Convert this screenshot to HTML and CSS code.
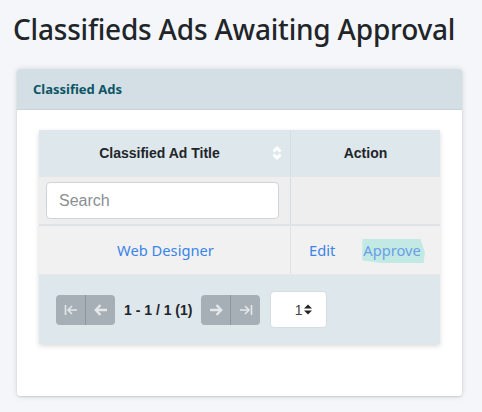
FILE: index.html
```html
<!DOCTYPE html>
<html>
<head>
<meta charset="utf-8">
<link rel="stylesheet" href="styles.css">
</head>
<body>
<h1 class="page-title">Classifieds Ads Awaiting Approval</h1>
<div class="card">
  <div class="card-header">Classified Ads</div>
  <div class="card-body">
    <div class="grid">
      <div class="row head">
        <div class="cell c1 th sortable">Classified Ad Title
          <svg class="sort" width="10" height="16" viewBox="0 0 10 16"><polyline points="1.5,6.5 5,3 8.5,6.5" fill="none" stroke="#fff" stroke-width="3"/><polyline points="1.5,9.5 5,13 8.5,9.5" fill="none" stroke="#fff" stroke-width="3"/></svg>
        </div>
        <div class="cell c2 th">Action</div>
      </div>
      <div class="row filter">
        <div class="cell c1 fcell"><div class="search">Search</div></div>
        <div class="cell c2"></div>
      </div>
      <div class="row data">
        <div class="cell c1"><a class="link">Web Designer</a></div>
        <div class="cell c2 actions"><a class="link">Edit</a><a class="link approve">Approve</a></div>
      </div>
      <div class="pager">
        <div class="btn-group">
          <span class="pbtn"><svg width="14" height="12" viewBox="0 0 14 12"><line x1="1.5" y1="1" x2="1.5" y2="11" stroke="#e4e8ea" stroke-width="1.6"/><polyline points="8,2 4,6 8,10" fill="none" stroke="#e4e8ea" stroke-width="1.6"/><line x1="4" y1="6" x2="13" y2="6" stroke="#e4e8ea" stroke-width="1.6"/></svg></span>
          <span class="pbtn"><svg width="14" height="12" viewBox="0 0 14 12"><polyline points="6.5,1 1.8,6 6.5,11" fill="none" stroke="#e4e8ea" stroke-width="2.4"/><line x1="2" y1="6" x2="13" y2="6" stroke="#e4e8ea" stroke-width="2.4"/></svg></span>
        </div>
        <span class="pinfo">1 - 1 / 1 (1)</span>
        <div class="btn-group">
          <span class="pbtn"><svg width="14" height="12" viewBox="0 0 14 12"><polyline points="7.5,1 12.2,6 7.5,11" fill="none" stroke="#e4e8ea" stroke-width="2.4"/><line x1="1" y1="6" x2="12" y2="6" stroke="#e4e8ea" stroke-width="2.4"/></svg></span>
          <span class="pbtn"><svg width="14" height="12" viewBox="0 0 14 12"><line x1="12.5" y1="1" x2="12.5" y2="11" stroke="#e4e8ea" stroke-width="1.6"/><polyline points="6,2 10,6 6,10" fill="none" stroke="#e4e8ea" stroke-width="1.6"/><line x1="1" y1="6" x2="10" y2="6" stroke="#e4e8ea" stroke-width="1.6"/></svg></span>
        </div>
        <div class="pselect"><span>1</span><svg width="8" height="11" viewBox="0 0 8 11"><polygon points="0,4.5 4,0.5 8,4.5" fill="#222"/><polygon points="0,6.5 4,10.5 8,6.5" fill="#222"/></svg></div>
      </div>
    </div>
  </div>
</div>
</body>
</html>
```
FILE: styles.css
```css
html, body {
  margin: 0;
  padding: 0;
  background: #f4f6f9;
}
body {
  width: 482px;
  height: 412px;
  overflow: hidden;
  font-family: "Noto Sans", "Open Sans", sans-serif;
}
.page-title {
  margin: 0;
  padding: 9px 0 0 13px;
  font-size: 28px;
  font-weight: 500;
  line-height: 40px;
  color: #212529;
  letter-spacing: -0.2px;
}
.card {
  margin: 20px 0 0 17px;
  width: 445px;
  background: #fff;
  border-radius: 3px;
  box-shadow: 0 0 6px rgba(0,0,0,0.12), 0 1px 2px rgba(0,0,0,0.12);
}
.card-header {
  height: 41px;
  box-sizing: border-box;
  padding: 12px 16px 0;
  background: #d3dfe4;
  border-bottom: 1px solid #c9d4d9;
  color: #0d5566;
  font-weight: 700;
  font-size: 13px;
  line-height: 16px;
  border-radius: 3px 3px 0 0;
}
.card-body {
  padding: 20px 22px 52px;
}
.grid {
  background: #dde7ec;
  box-shadow: 0 2px 5px rgba(0,0,0,0.15);
  font-family: "Liberation Sans", Arial, sans-serif;
}
.row {
  display: flex;
}
.cell {
  box-sizing: border-box;
  display: flex;
  align-items: center;
  justify-content: center;
}
.c1 {
  width: 252px;
  border-right: 1px solid #d4dde1;
}
.c2 {
  width: 149px;
}
.head {
  height: 46px;
  border-bottom: 1px solid #e3e6e8;
}
.th {
  font-weight: 700;
  font-size: 14px;
  color: #212529;
  position: relative;
}
.sortable {
  padding-right: 10px;
}
.sort {
  position: absolute;
  right: 8px;
  top: 15px;
}
.filter {
  height: 47px;
  background: #eeeeee;
  border-bottom: 2px solid #dfe3e6;
}
.fcell {
  justify-content: flex-start;
  padding-left: 7px;
}
.search {
  width: 233px;
  height: 37px;
  box-sizing: border-box;
  background: #fff;
  border: 1px solid #cfd4d8;
  border-radius: 4px;
  padding: 0 0 0 12px;
  display: flex;
  align-items: center;
  color: #8a8f93;
  font-size: 16px;
}
.data {
  height: 48px;
  background: #f1f1f1;
  border-bottom: 1px solid #e6e8e9;
}
.data .c1 {
  border-right-color: #e0e3e5;
}
.link {
  color: #3a84e8;
  font-family: "Noto Sans", "Open Sans", sans-serif;
  font-size: 14.7px;
  text-decoration: none;
}
.data .c1 .link {
  margin-left: 2px;
}
.actions {
  justify-content: flex-start;
  padding-left: 18px;
}
.approve {
  margin-left: 27px;
  padding: 3px 4px 3px 1px;
  margin-right: -6px;
  background: #c2e9e4;
  color: #6a9fe6;
  clip-path: polygon(0 8%, 93% 8%, 100% 60%, 98% 100%, 30% 100%, 0 90%);
}
.pager {
  height: 69px;
  display: flex;
  align-items: center;
  padding-left: 17px;
  box-sizing: border-box;
}
.btn-group {
  display: flex;
  border-radius: 4px;
  overflow: hidden;
  height: 30px;
}
.pbtn {
  width: 29px;
  height: 30px;
  background: #a6afb5;
  display: flex;
  align-items: center;
  justify-content: center;
}
.pbtn + .pbtn {
  border-left: 1px solid #8d969c;
}
.pinfo {
  font-weight: 700;
  font-size: 14px;
  color: #212529;
  margin: 0 9px;
}
.pselect {
  margin-left: 10px;
  width: 57px;
  height: 37px;
  box-sizing: border-box;
  background: #fff;
  border: 1px solid #d7dce0;
  border-radius: 4px;
  display: flex;
  align-items: center;
  justify-content: flex-end;
  padding-right: 14px;
  font-size: 14px;
  color: #444;
  gap: 2px;
}
```
